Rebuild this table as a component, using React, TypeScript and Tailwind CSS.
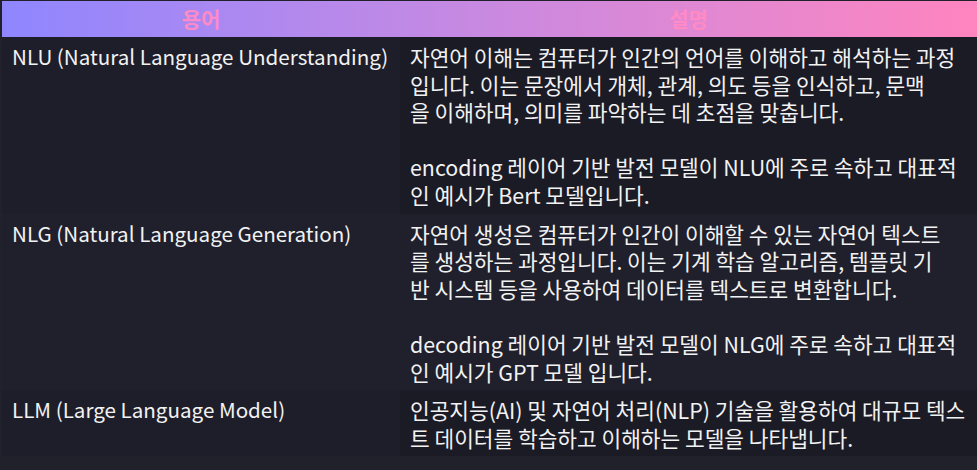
import React from 'react';

type Row = {
  term: string;
  desc: string[][];
};

// 원본 줄바꿈을 그대로 유지 (빈 문단 사이 한 줄)
const rows: Row[] = [
  {
    term: 'NLU (Natural Language Understanding)',
    desc: [
      [
        '자연어 이해는 컴퓨터가 인간의 언어를 이해하고 해석하는 과정',
        '입니다. 이는 문장에서 개체, 관계, 의도 등을 인식하고, 문맥',
        '을 이해하며, 의미를 파악하는 데 초점을 맞춥니다.',
      ],
      ['encoding 레이어 기반 발전 모델이 NLU에 주로 속하고 대표적', '인 예시가 Bert 모델입니다.'],
    ],
  },
  {
    term: 'NLG (Natural Language Generation)',
    desc: [
      [
        '자연어 생성은 컴퓨터가 인간이 이해할 수 있는 자연어 텍스트',
        '를 생성하는 과정입니다. 이는 기계 학습 알고리즘, 템플릿 기',
        '반 시스템 등을 사용하여 데이터를 텍스트로 변환합니다.',
      ],
      ['decoding 레이어 기반 발전 모델이 NLG에 주로 속하고 대표적', '인 예시가 GPT 모델 입니다.'],
    ],
  },
  {
    term: 'LLM (Large Language Model)',
    desc: [['인공지능(AI) 및 자연어 처리(NLP) 기술을 활용하여 대규모 텍스', '트 데이터를 학습하고 이해하는 모델을 나타냅니다.']],
  },
];

export default function App() {
  return (
    <div
      className="min-h-[470px] bg-[#21212c] pt-px pl-[2px] leading-[27.6px] text-[#f2f2f2]"
      style={{ fontFamily: '"Noto Sans CJK KR", "Noto Sans", sans-serif' }}
    >
      <table className="w-full table-fixed border-collapse">
        <thead>
          <tr className="h-[36px] bg-gradient-to-r from-[#8f86ff] to-[#ff84bf]">
            <th className="w-[398px] text-[21px] font-bold text-[#ff8ac6]">용어</th>
            <th className="text-[21px] font-bold text-[#ff8ac6]">설명</th>
          </tr>
        </thead>
        <tbody>
          {rows.map((row, i) => {
            const even = i % 2 === 1;
            return (
              <tr key={row.term}>
                <td
                  className={`px-[10px] pt-[6px] pb-[5px] align-top text-[20.6px] whitespace-nowrap ${
                    even ? 'bg-[#20202c]' : 'bg-[#1e1e2a]'
                  }`}
                >
                  {row.term}
                </td>
                <td
                  className={`px-[10px] pt-[6px] pb-[5px] align-top text-[21.4px] ${
                    even ? 'bg-[#20202c]' : 'bg-[#1b1b26]'
                  }`}
                >
                  {row.desc.map((para, j) => (
                    <div key={j} className={j > 0 ? 'mt-[27.6px]' : ''}>
                      {para.map((line) => (
                        <div key={line} className="whitespace-nowrap">
                          {line}
                        </div>
                      ))}
                    </div>
                  ))}
                </td>
              </tr>
            );
          })}
        </tbody>
      </table>
    </div>
  );
}
